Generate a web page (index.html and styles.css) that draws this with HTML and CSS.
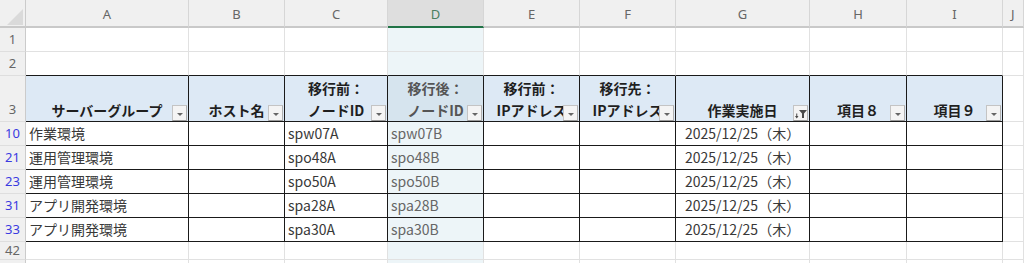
FILE: index.html
```html
<!DOCTYPE html>
<html lang="ja">
<head>
<meta charset="utf-8">
<link rel="stylesheet" href="styles.css">
</head>
<body>
<div class="sheet">
  <div class="row colhead">
    <div class="corner"><svg width="25" height="26" viewBox="0 0 25 26"><polygon points="23,9 23,25 7,25" fill="#dadada"/></svg></div>
    <div>A</div><div>B</div><div>C</div><div class="sel-h">D</div><div>E</div><div>F</div><div>G</div><div>H</div><div>I</div><div class="lastcol">J</div>
  </div>
  <div class="row r24">
    <div class="rh">1</div>
    <div></div><div></div><div></div><div class="sel"></div><div></div><div></div><div></div><div></div><div></div><div></div>
  </div>
  <div class="row r24 above">
    <div class="rh">2</div>
    <div class="tb"></div><div class="tb"></div><div class="tb"></div><div class="tb sel"></div><div class="tb"></div><div class="tb"></div><div class="tb"></div><div class="tb"></div><div class="tb"></div><div></div>
  </div>
  <div class="row r46">
    <div class="rh rh3">3</div>
    <div class="th">サーバーグループ<span class="fb"><i></i></span></div>
    <div class="th">ホスト名<span class="fb"><i></i></span></div>
    <div class="th"><span>移行前：</span><span>ノードID</span><span class="fb"><i></i></span></div>
    <div class="th thsel"><span>移行後：</span><span>ノードID</span><span class="fb"><i></i></span></div>
    <div class="th"><span>移行前：</span><span>IPアドレス</span><span class="fb"><i></i></span></div>
    <div class="th"><span>移行先：</span><span>IPアドレス</span><span class="fb"><i></i></span></div>
    <div class="th">作業実施日<span class="fb fb-on"><svg width="15" height="16" viewBox="0 0 15 16"><polygon points="6,5 14,5 11,8.5 11,13 9,13 9,8.5" fill="#4a4a4a"/><polygon points="2,11 5.5,11 3.75,13.5" fill="#4a4a4a"/><rect x="3.25" y="8.5" width="1" height="2.5" fill="#4a4a4a"/></svg></span></div>
    <div class="th">項目８<span class="fb"><i></i></span></div>
    <div class="th last">項目９<span class="fb"><i></i></span></div>
    <div></div>
  </div>
  <div class="row r24 data">
    <div class="rh blue">10</div>
    <div class="td">作業環境</div><div class="td"></div><div class="td">spw07A</div><div class="td sel">spw07B</div><div class="td"></div><div class="td"></div><div class="td date">2025/12/25（木）</div><div class="td"></div><div class="td last"></div><div></div>
  </div>
  <div class="row r24 data">
    <div class="rh blue">21</div>
    <div class="td">運用管理環境</div><div class="td"></div><div class="td">spo48A</div><div class="td sel">spo48B</div><div class="td"></div><div class="td"></div><div class="td date">2025/12/25（木）</div><div class="td"></div><div class="td last"></div><div></div>
  </div>
  <div class="row r24 data">
    <div class="rh blue">23</div>
    <div class="td">運用管理環境</div><div class="td"></div><div class="td">spo50A</div><div class="td sel">spo50B</div><div class="td"></div><div class="td"></div><div class="td date">2025/12/25（木）</div><div class="td"></div><div class="td last"></div><div></div>
  </div>
  <div class="row r24 data">
    <div class="rh blue">31</div>
    <div class="td">アプリ開発環境</div><div class="td"></div><div class="td">spa28A</div><div class="td sel">spa28B</div><div class="td"></div><div class="td"></div><div class="td date">2025/12/25（木）</div><div class="td"></div><div class="td last"></div><div></div>
  </div>
  <div class="row r24 data">
    <div class="rh blue">33</div>
    <div class="td">アプリ開発環境</div><div class="td"></div><div class="td">spa30A</div><div class="td sel">spa30B</div><div class="td"></div><div class="td"></div><div class="td date">2025/12/25（木）</div><div class="td"></div><div class="td last"></div><div></div>
  </div>
  <div class="row r18">
    <div class="rh">42</div>
    <div></div><div></div><div></div><div class="sel"></div><div></div><div></div><div></div><div></div><div></div><div></div>
  </div>
  <div class="row r24">
    <div class="rh"></div>
    <div></div><div></div><div></div><div class="sel"></div><div></div><div></div><div></div><div></div><div></div><div></div>
  </div>
</div>
</body>
</html>
```

FILE: styles.css
```css
html, body {
  margin: 0;
  padding: 0;
  background: #ffffff;
  overflow: hidden;
}

body {
  font-family: "Noto Sans CJK JP", "Noto Sans", sans-serif;
  font-size: 14px;
  color: #333;
}

.sheet {
  width: 1024px;
  height: 263px;
  overflow: hidden;
}

.row {
  display: grid;
  grid-template-columns: 26px 163px 96px 103px 96px 96px 96px 134px 97px 96px 1fr;
}

.row > div {
  box-sizing: border-box;
  border-right: 1px solid #e1e1e1;
  border-bottom: 1px solid #e1e1e1;
  overflow: hidden;
  white-space: nowrap;
  position: relative;
}

.r24 { height: 24px; }
.r46 { height: 46px; }
.r18 { height: 18px; }

/* column header */
.colhead {
  height: 28px;
}
.colhead > div {
  background: #f0f0f0;
  border-right: 1px solid #d6d6d6;
  border-bottom: 2px solid #c9c9c9;
  font-family: "Noto Sans", sans-serif;
  font-size: 13px;
  color: #666;
  text-align: center;
  line-height: 28px;
}
.colhead > .corner {
  border-right: 1px solid #cbcbcb;
  line-height: 0;
}
.colhead > .sel-h {
  background: #dedede;
  border-bottom: 2px solid #217346;
  color: #4a7f60;
}
.colhead > .lastcol {
  text-align: left;
  padding-left: 8px;
}

/* row header */
.row > .rh {
  background: #f0f0f0;
  border-right: 1px solid #cbcbcb;
  border-bottom: 1px solid #dedede;
  font-family: "Noto Sans", sans-serif;
  font-size: 13px;
  color: #666;
  text-align: center;
  line-height: 23px;
}
.row > .rh3 {
  display: flex;
  align-items: flex-end;
  justify-content: center;
  line-height: 22px;
  padding-bottom: 1px;
}
.row.r18 > .rh {
  line-height: 16px;
}
.row > .rh.blue {
  color: #3a3ae0;
}

/* selected column */
.row > .sel {
  background: #edf5f8;
  color: #666;
}

/* table top border */
.row > .tb {
  border-bottom: 1px solid #1a1a1a;
}

/* table header */
.row > .th {
  background: #dde9f5;
  border-right: 1px solid #1a1a1a;
  border-bottom: 1px solid #1a1a1a;
  display: flex;
  flex-direction: column;
  justify-content: flex-end;
  align-items: center;
  line-height: 22px;
  font-weight: 700;
  color: #1f1f1f;
}
.row > .thsel {
  background: #d6e4ee;
  color: #555;
}

.fb {
  position: absolute;
  right: 1px;
  bottom: 0;
  width: 15px;
  height: 16px;
  box-sizing: border-box;
  background: #f4f4f4;
  border: 1px solid #c4c4c4;
  border-bottom-color: #9a9a9a;
  border-right-color: #b0b0b0;
  display: flex;
  align-items: center;
  justify-content: center;
}
.fb i {
  display: block;
  width: 0;
  height: 0;
  margin-top: 3px;
  border-left: 3px solid transparent;
  border-right: 3px solid transparent;
  border-top: 3px solid #666;
}
.fb-on svg {
  position: absolute;
  left: -1px;
  top: -1px;
}

/* data cells */
.row > .td {
  border-right: 1px solid #1a1a1a;
  border-bottom: 1px solid #1a1a1a;
  padding-left: 3px;
  line-height: 23px;
  color: #383838;
}
.row > .td.date {
  padding-left: 9px;
}
.row > .td.sel {
  color: #666;
}
```
